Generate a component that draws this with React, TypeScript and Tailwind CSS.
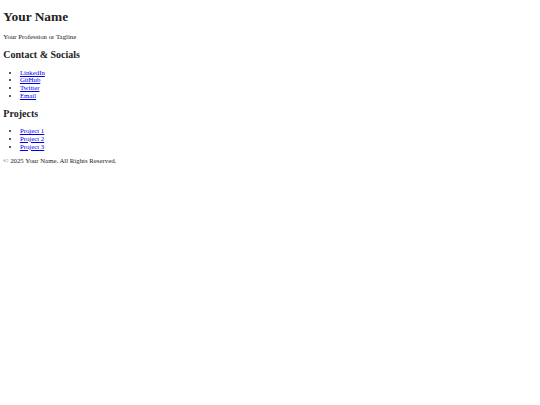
export default function App() {
  const socials = ["LinkedIn", "GitHub", "Twitter", "Email"];
  const projects = ["Project 1", "Project 2", "Project 3"];

  return (
    <div className="m-[3.32px] bg-white text-[#222] text-[6.8px] leading-[7.64px] font-['Liberation_Serif',serif]">
      <header>
        <h1 className="my-[8.9px] text-[13.4px] font-bold leading-[15.27px]">Your Name</h1>
        <p className="my-[6.64px]">Your Profession or Tagline</p>
      </header>

      <section>
        <h2 className="my-[8.27px] text-[10px] font-bold leading-[11.45px]">Contact &amp; Socials</h2>
        <ul className="my-[6.64px] pl-[16.6px] list-disc">
          {socials.map((s) => (
            <li key={s}>
              <a href="#" className="text-[#0000ee] underline">{s}</a>
            </li>
          ))}
        </ul>
      </section>

      <section>
        <h2 className="my-[8.27px] text-[10px] font-bold leading-[11.45px]">Projects</h2>
        <ul className="my-[6.64px] pl-[16.6px] list-disc">
          {projects.map((p) => (
            <li key={p}>
              <a href="#" className="text-[#0000ee] underline">{p}</a>
            </li>
          ))}
        </ul>
      </section>

      <footer>
        <p className="my-[6.64px]">© 2025 Your Name. All Rights Reserved.</p>
      </footer>
    </div>
  );
}
